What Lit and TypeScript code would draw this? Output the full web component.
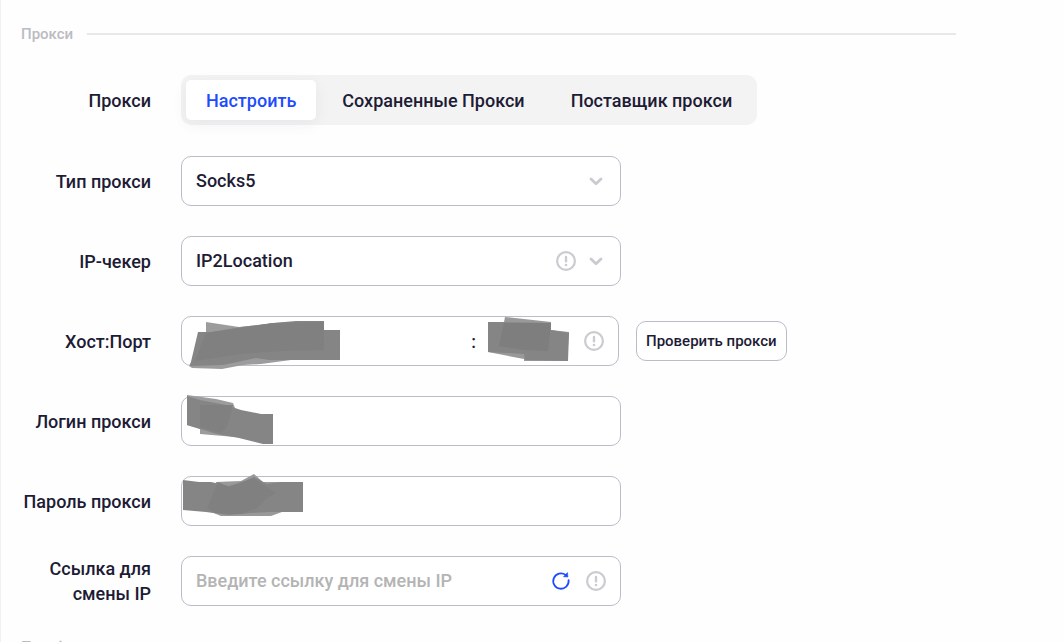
import { LitElement, html, css, svg } from "lit";
import { customElement, state } from "lit/decorators.js";

const chevron = html`<svg class="chevron" width="20" height="20" viewBox="0 0 20 20" aria-hidden="true">
  <path d="M5 8 L10 12.8 L15 8" fill="none" stroke="#cbcad3" stroke-width="2.8" stroke-linecap="round" stroke-linejoin="round" />
</svg>`;

const info = html`<svg class="info" width="20" height="20" viewBox="0 0 20 20" aria-hidden="true">
  <circle cx="10" cy="10" r="8.9" fill="none" stroke="#cbcbd0" stroke-width="2.2" />
  <path d="M10 6 V10.3" stroke="#cbcbd0" stroke-width="2.4" stroke-linecap="round" />
  <circle cx="10" cy="14" r="1.35" fill="#cbcbd0" />
</svg>`;

const refresh = html`<svg width="20" height="20" viewBox="0 0 20 20" aria-hidden="true">
  <path d="M17.6 9.2 A7.7 7.7 0 1 1 14.6 3.9" fill="none" stroke="#1f4bff" stroke-width="1.8" stroke-linecap="round" />
  <path d="M16.5 1.6 L16.9 6 L12.5 5.7 Z" fill="#1f4bff" stroke="#1f4bff" stroke-width="0.6" stroke-linejoin="round" />
</svg>`;

const cover = (shapes: [string, string][]) => html`<svg class="cover" width="440" height="60" viewBox="0 -5 440 60" aria-hidden="true">
  ${shapes.map(([points, fill]) => svg`<polygon points=${points} fill=${fill} />`)}
</svg>`;

const hostCover = cover([
  ["25,6 58,11 95,7 143,5 143,34 118,42 110,44 80,48 62,49 41,53 11,52 8,50 25,17", "#9c9c9c"],
  ["17,16 30,16 60,11 92,7 115,5 143,5 143,14 159,14 159,44 88,44 75,42 42,49 9,50", "#858585"],
  ["25,17 60,12 92,7 143,6 143,34 100,35 60,38 14,45", "#808080"],
]);
const portCover = cover([
  ["307,6 323,6 324,1 370,6 370,14 388,16 386,45 343,45 343,43 307,36", "#999999"],
  ["307,6 370,7 370,14 388,17 387,45 344,44 343,38 307,36", "#858585"],
  ["323,7 370,7 367,35 343,34 318,30", "#7e7e7e"],
]);
const loginCover = cover([
  ["6,-1 35,3 52,7 54,12 54,41 19,38 19,33 6,29", "#9c9c9c"],
  ["6,0 19,4 45,9 60,14 80,18 92,18 92,48 82,48 58,42 36,38 6,29", "#858585"],
  ["19,9 52,9 46,31 40,37 19,31", "#808080"],
]);
const passwordCover = cover([
  ["35,6 60,5 73,-2 82,6 120,6 112,32 90,40 40,40 30,36", "#999999"],
  ["2,4 18,6 30,6 48,10 67,4 73,1 86,8 100,6 122,6 122,36 90,36 70,37 48,39 25,36 2,34", "#858585"],
  ["37,6 48,11 72,2 95,17 85,23 76,32 60,38 35,37 26,32", "#808080"],
]);

@customElement("app-root")
export class AppRoot extends LitElement {
  @state() private tab = 0;

  static styles = css`
    :host {
      display: block;
      box-sizing: border-box;
      height: 100vh;
      overflow: hidden;
      background: #fefefe;
      border-left: 1px solid #f1f1f3;
      color: #1d1b35;
      font: 500 18px/25px Roboto, sans-serif;
    }
    * { box-sizing: border-box; }
    .page { padding: 21px 108px 0 20px; }
    .section {
      display: flex;
      align-items: center;
      gap: 14px;
      margin: 0;
      font-size: 15px;
      line-height: 26px;
      font-weight: 500;
      color: #bbbbc2;
    }
    .section::after {
      content: "";
      flex: 1;
      height: 2px;
      background: #e8e8e8;
    }
    .form {
      display: grid;
      gap: 30px;
      padding: 28px 0 28px;
    }
    .row {
      display: grid;
      grid-template-columns: 130px minmax(0, 1fr);
      column-gap: 30px;
      align-items: center;
    }
    .row.mode { padding-bottom: 1px; }
    .label { text-align: right; }
    .tabs {
      display: flex;
      justify-self: start;
      gap: 6px;
      height: 50px;
      padding: 5px;
      border-radius: 10px;
      background: #f3f3f3;
    }
    .tab {
      padding: 0 20px;
      border: 0;
      border-radius: 5px;
      background: transparent;
      color: inherit;
      font: inherit;
      cursor: pointer;
    }
    .tab.active {
      background: #fff;
      color: #1f4bff;
      box-shadow: 0 4px 16px rgba(40, 40, 90, 0.06);
    }
    .line {
      display: flex;
      align-items: center;
      gap: 17px;
    }
    .field {
      position: relative;
      display: flex;
      align-items: center;
      width: 100%;
      max-width: 440px;
      height: 50px;
      border: 1px solid #bbbcc8;
      border-radius: 10px;
      background: #fff;
    }
    .field.pair { max-width: 438px; padding-right: 14px; }
    .field.link { gap: 15px; padding-right: 14px; }
    .control {
      flex: 1;
      min-width: 0;
      width: 100%;
      height: 48px;
      padding: 0 14px 2px;
      border: 0;
      border-radius: 10px;
      outline: 0;
      appearance: none;
      background: transparent;
      color: inherit;
      font: inherit;
    }
    .control::placeholder { color: #b4b4b4; opacity: 1; }
    .port { flex: 0 0 108px; }
    .icons {
      position: absolute;
      right: 14px;
      display: flex;
      gap: 10px;
      pointer-events: none;
    }
    .cover {
      position: absolute;
      left: -1px;
      top: -6px;
      pointer-events: none;
    }
    .check {
      height: 40px;
      padding: 0 9px;
      border: 1px solid #bbbcc8;
      border-radius: 10px;
      background: #fff;
      color: inherit;
      font: 500 15px/20px Roboto, sans-serif;
      white-space: nowrap;
    }
    .reload {
      display: flex;
      padding: 0;
      border: 0;
      background: none;
    }
    svg { display: block; flex: none; }
  `;

  render() {
    return html`
      <main class="page">
        <h2 class="section">Прокси</h2>
        <form class="form">
          <div class="row mode">
            <span class="label" id="mode">Прокси</span>
            <div class="tabs" role="group" aria-labelledby="mode">
              ${["Настроить", "Сохраненные Прокси", "Поставщик прокси"].map(
                (name, i) => html`<button
                  type="button"
                  class="tab ${i === this.tab ? "active" : ""}"
                  @click=${() => (this.tab = i)}
                >${name}</button>`
              )}
            </div>
          </div>
          <div class="row">
            <label class="label" for="type">Тип прокси</label>
            <div class="field">
              <select class="control" id="type"><option>Socks5</option></select>
              <span class="icons">${chevron}</span>
            </div>
          </div>
          <div class="row">
            <label class="label" for="checker">IP-чекер</label>
            <div class="field">
              <select class="control" id="checker"><option>IP2Location</option></select>
              <span class="icons">${info}${chevron}</span>
            </div>
          </div>
          <div class="row">
            <label class="label" for="host">Хост:Порт</label>
            <div class="line">
              <div class="field pair">
                <input class="control" id="host" type="text" />
                <span>:</span>
                <input class="control port" type="text" aria-label="Порт" />
                ${info}${hostCover}${portCover}
              </div>
              <button class="check" type="button">Проверить прокси</button>
            </div>
          </div>
          <div class="row">
            <label class="label" for="login">Логин прокси</label>
            <div class="field">
              <input class="control" id="login" type="text" />
              ${loginCover}
            </div>
          </div>
          <div class="row">
            <label class="label" for="password">Пароль прокси</label>
            <div class="field">
              <input class="control" id="password" type="text" />
              ${passwordCover}
            </div>
          </div>
          <div class="row">
            <label class="label" for="link">Ссылка для смены IP</label>
            <div class="field link">
              <input class="control" id="link" type="text" placeholder="Введите ссылку для смены IP" />
              <button class="reload" type="button" aria-label="Сменить IP">${refresh}</button>
              ${info}
            </div>
          </div>
        </form>
        <h2 class="section">Платформа</h2>
      </main>
    `;
  }
}
